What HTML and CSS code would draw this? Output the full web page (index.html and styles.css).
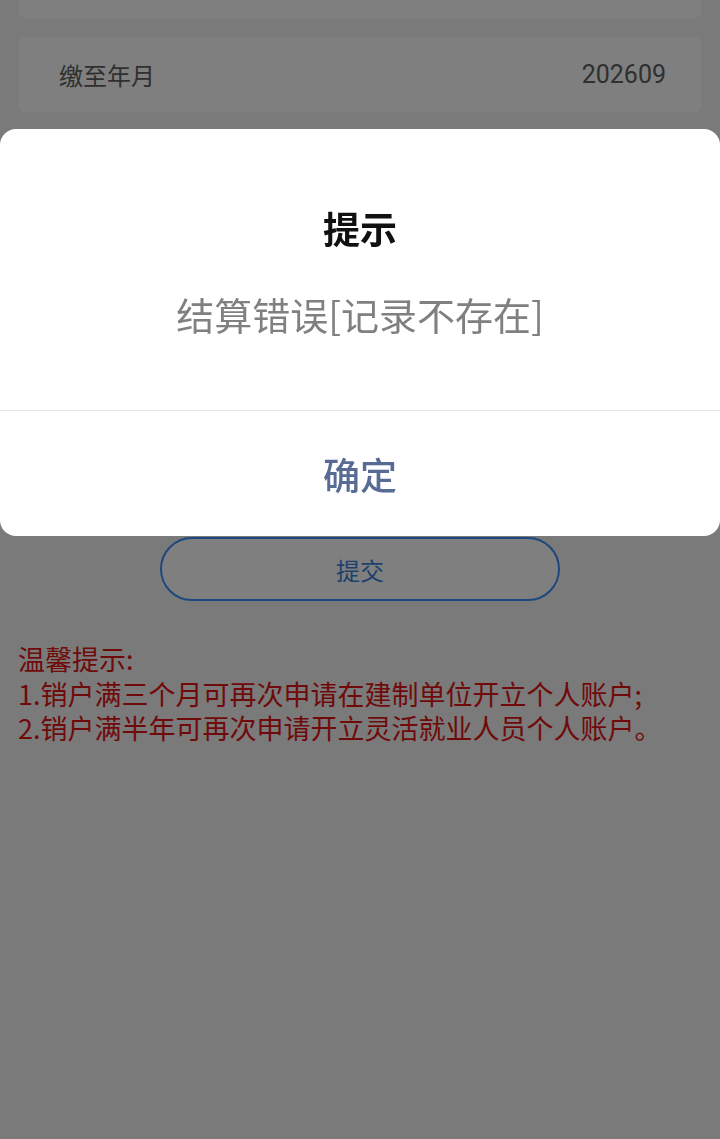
FILE: index.html
```html
<!DOCTYPE html>
<html lang="zh-CN">
<head>
<meta charset="utf-8">
<title>销户</title>
<link rel="stylesheet" href="styles.css">
</head>
<body>
<div class="page">
  <div class="card card-top"></div>
  <div class="card row"><span class="label">缴至年月</span><span class="value">202609</span></div>
  <div class="card row"><span class="label">销户原因</span><span class="value">其他</span></div>
  <div class="card row"><span class="label">开户银行</span><span class="value">建设银行</span></div>
  <div class="card row"><span class="label">银行账号</span><span class="value">6217****0000</span></div>
  <div class="card row"><span class="label">手机号码</span><span class="value">138****0000</span></div>
  <div class="actions"><button class="submit">提交</button></div>
  <div class="tips">
    <p>温馨提示:</p>
    <p>1.销户满三个月可再次申请在建制单位开立个人账户;</p>
    <p>2.销户满半年可再次申请开立灵活就业人员个人账户。</p>
  </div>
</div>
<div class="mask"></div>
<div class="dialog">
  <div class="dialog-body">
    <div class="dialog-title">提示</div>
    <div class="dialog-msg">结算错误[记录不存在]</div>
  </div>
  <div class="dialog-footer"><span class="confirm">确定</span></div>
</div>
</body>
</html>
```

FILE: styles.css
```css
* { box-sizing: border-box; }
html, body {
  margin: 0;
  padding: 0;
  background: #f4f4f4;
  font-family: "Noto Sans CJK SC", "Noto Sans", sans-serif;
}
body { height: 1139px; overflow: hidden; }
.page {
  padding: 0 18px;
}
.card {
  background: #fff;
  border-radius: 8px;
}
.card-top {
  height: 60px;
  margin-top: -42px;
  margin-bottom: 19px;
}
.row {
  height: 75px;
  margin-bottom: 19px;
  display: flex;
  align-items: center;
  justify-content: space-between;
  padding: 0 36px 0 41px;
  font-size: 24px;
  color: #606060;
}
.value { font-family: "Roboto", "Noto Sans CJK SC", sans-serif; font-size: 25px; }
.actions {
  display: flex;
  justify-content: center;
  margin-top: 49px;
}
.submit {
  width: 400px;
  height: 64px;
  border: 2px solid #3c8fff;
  border-radius: 32px;
  background: #fff;
  color: #3f7fd8;
  font-family: inherit;
  font-size: 24px;
  padding: 0;
}
.tips {
  margin-top: 41px;
  color: #e01515;
  font-size: 27px;
  line-height: 34.5px;
}
.tips p { margin: 0; }
.mask {
  position: fixed;
  inset: 0;
  background: rgba(0, 0, 0, 0.5);
}
.dialog {
  position: fixed;
  left: 0;
  right: 0;
  top: 129px;
  background: #fff;
  border-radius: 16px;
  overflow: hidden;
}
.dialog-body {
  height: 282px;
  padding-top: 74px;
  text-align: center;
  border-bottom: 1px solid #e5e5e5;
}
.dialog-title {
  font-size: 37px;
  font-weight: bold;
  line-height: 50px;
  color: #111;
}
.dialog-msg {
  margin-top: 36px;
  font-size: 38px;
  line-height: 50px;
  color: #808080;
}
.dialog-footer {
  height: 125px;
  display: flex;
  align-items: center;
  justify-content: center;
}
.confirm {
  font-size: 37px;
  color: #576b95;
  font-weight: 500;
}
```
